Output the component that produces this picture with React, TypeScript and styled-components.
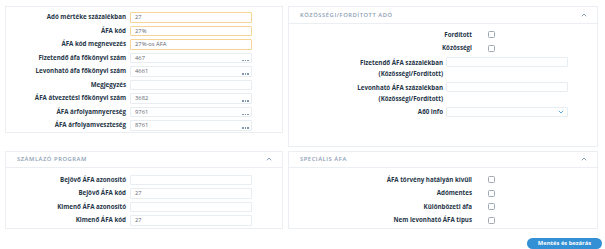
import styled, { createGlobalStyle } from 'styled-components'

const GlobalStyle = createGlobalStyle`
  html, body { margin: 0; padding: 0; background: #fff; }
  body { font-family: "Open Sans", "Liberation Sans", sans-serif; }
`

const Page = styled.div`
  width: 605px;
  height: 249px;
  padding: 6px 0 0 5px;
  box-sizing: border-box;
  overflow: hidden;
`

const Grid = styled.div`
  display: grid;
  grid-template-columns: 278px 310px;
  column-gap: 5px;
  row-gap: 4px;
  align-items: start;
`

const Card = styled.section`
  border: 1px solid #ebeff4;
  background: #fff;
  box-sizing: border-box;
`

const CardHeader = styled.div`
  height: 15.5px;
  display: flex;
  align-items: center;
  justify-content: space-between;
  padding: 0 10px 0 11px;
  border-bottom: 1px solid #ebeff4;
  font-size: 5.8px;
  font-weight: 600;
  letter-spacing: 0.55px;
  color: #8b9db3;
  text-transform: uppercase;
`

const CardBody = styled.div<{ $top: number; $bottom: number }>`
  display: flex;
  flex-direction: column;
  gap: 3px;
  padding: ${(p) => p.$top}px 0 ${(p) => p.$bottom}px;
`

const FieldRow = styled.div<{ $label: number; $gap?: number }>`
  display: grid;
  grid-template-columns: ${(p) => p.$label}px 122px;
  column-gap: ${(p) => p.$gap ?? 4}px;
  align-items: start;
`

const Label = styled.div<{ $lines?: number }>`
  font-size: 6.2px;
  font-weight: 700;
  color: #243447;
  text-align: right;
  line-height: ${(p) => (p.$lines && p.$lines > 1 ? '11px' : '10.5px')};
  white-space: nowrap;
`

const InputWrap = styled.div`
  position: relative;
  height: 10.5px;
`

const Input = styled.input<{ $required?: boolean }>`
  display: block;
  width: 100%;
  height: 10.5px;
  box-sizing: border-box;
  margin: 0;
  padding: 0 4px;
  border: 1px solid ${(p) => (p.$required ? '#f5d597' : '#e8edf2')};
  border-radius: 1px;
  background: #fff;
  font-family: "Open Sans", "Liberation Sans", sans-serif;
  font-size: 5.8px;
  color: #5e6670;
  outline: none;
`

const Dots = styled.div`
  position: absolute;
  right: 3px;
  bottom: 2px;
  display: flex;
  gap: 1px;
  span {
    width: 1.6px;
    height: 1.4px;
    background: #7f96b0;
  }
`

const SelectBox = styled.div`
  height: 10.5px;
  box-sizing: border-box;
  border: 1px solid #e8edf2;
  border-radius: 1px;
  display: flex;
  align-items: center;
  justify-content: flex-end;
  padding-right: 3px;
`

const CheckRow = styled.div<{ $label: number }>`
  display: grid;
  grid-template-columns: ${(p) => p.$label}px 7px;
  column-gap: 16px;
  align-items: center;
  height: 10.5px;
`

const Check = styled.span`
  display: block;
  width: 7px;
  height: 7px;
  box-sizing: border-box;
  border: 1px solid #9fa9b4;
  border-radius: 1.5px;
  background: #fff;
`

const Footer = styled.div`
  display: flex;
  justify-content: flex-end;
  padding-right: 3px;
  margin-top: 9px;
`

const SaveButton = styled.button`
  width: 75px;
  height: 11px;
  padding: 0;
  border: none;
  border-radius: 6px;
  background: #3390d4;
  color: #fff;
  font-family: "Open Sans", "Liberation Sans", sans-serif;
  font-size: 5.8px;
  font-weight: 700;
  line-height: 11px;
`

const ChevronUp = () => (
  <svg width="6" height="4" viewBox="0 0 6 4">
    <polyline points="0.8,3.3 3,1 5.2,3.3" fill="none" stroke="#8b9db3" strokeWidth="1" />
  </svg>
)

const ChevronDown = () => (
  <svg width="6" height="4" viewBox="0 0 6 4">
    <polyline points="0.8,0.8 3,3 5.2,0.8" fill="none" stroke="#5aa7df" strokeWidth="1" />
  </svg>
)

const mainFields = [
  { label: 'Adó mértéke százalékban', value: '27', required: true },
  { label: 'ÁFA kód', value: '27%', required: true },
  { label: 'ÁFA kód megnevezés', value: '27%-os ÁFA', required: true },
  { label: 'Fizetendő áfa főkönyvi szám', value: '467', dots: true },
  { label: 'Levonható áfa főkönyvi szám', value: '4661', dots: true },
  { label: 'Megjegyzés', value: '' },
  { label: 'ÁFA átvezetési főkönyvi szám', value: '3682', dots: true },
  { label: 'ÁFA árfolyamnyereség', value: '9761', dots: true },
  { label: 'ÁFA árfolyamveszteség', value: '8761', dots: true },
]

const invoiceFields = [
  { label: 'Bejövő ÁFA azonosító', value: '' },
  { label: 'Bejövő ÁFA kód', value: '27' },
  { label: 'Kimenő ÁFA azonosító', value: '' },
  { label: 'Kimenő ÁFA kód', value: '27' },
]

const specialChecks = [
  'ÁFA törvény hatályán kívüli',
  'Adómentes',
  'Különbözeti áfa',
  'Nem levonható ÁFA típus',
]

export default function App() {
  return (
    <>
      <GlobalStyle />
      <Page>
        <Grid>
          <Card>
            <CardBody $top={5} $bottom={1.5}>
              {mainFields.map((f) => (
                <FieldRow key={f.label} $label={120}>
                  <Label>{f.label}</Label>
                  <InputWrap>
                    <Input readOnly defaultValue={f.value} $required={f.required} />
                    {f.dots && (
                      <Dots>
                        <span />
                        <span />
                        <span />
                      </Dots>
                    )}
                  </InputWrap>
                </FieldRow>
              ))}
            </CardBody>
          </Card>

          <Card>
            <CardHeader>
              <span>Közösségi/fordított adó</span>
              <ChevronUp />
            </CardHeader>
            <CardBody $top={6} $bottom={28.5}>
              <CheckRow $label={183}>
                <Label>Fordított</Label>
                <Check />
              </CheckRow>
              <CheckRow $label={183}>
                <Label>Közösségi</Label>
                <Check />
              </CheckRow>
              <FieldRow $label={154} $gap={3}>
                <Label $lines={2}>
                  Fizetendő ÁFA százalékban
                  <br />
                  (Közösségi/Fordított)
                </Label>
                <InputWrap>
                  <Input readOnly defaultValue="" />
                </InputWrap>
              </FieldRow>
              <FieldRow $label={154} $gap={3}>
                <Label $lines={2}>
                  Levonható ÁFA százalékban
                  <br />
                  (Közösségi/Fordított)
                </Label>
                <InputWrap>
                  <Input readOnly defaultValue="" />
                </InputWrap>
              </FieldRow>
              <FieldRow $label={154} $gap={3}>
                <Label>A60 info</Label>
                <SelectBox>
                  <ChevronDown />
                </SelectBox>
              </FieldRow>
            </CardBody>
          </Card>

          <Card>
            <CardHeader>
              <span>Számlázó program</span>
              <ChevronUp />
            </CardHeader>
            <CardBody $top={6.5} $bottom={2}>
              {invoiceFields.map((f) => (
                <FieldRow key={f.label} $label={120}>
                  <Label>{f.label}</Label>
                  <InputWrap>
                    <Input readOnly defaultValue={f.value} />
                  </InputWrap>
                </FieldRow>
              ))}
            </CardBody>
          </Card>

          <Card>
            <CardHeader>
              <span>Speciális áfa</span>
              <ChevronUp />
            </CardHeader>
            <CardBody $top={6.5} $bottom={2}>
              {specialChecks.map((c) => (
                <CheckRow key={c} $label={183}>
                  <Label>{c}</Label>
                  <Check />
                </CheckRow>
              ))}
            </CardBody>
          </Card>
        </Grid>
        <Footer>
          <SaveButton>Mentés és bezárás</SaveButton>
        </Footer>
      </Page>
    </>
  )
}
